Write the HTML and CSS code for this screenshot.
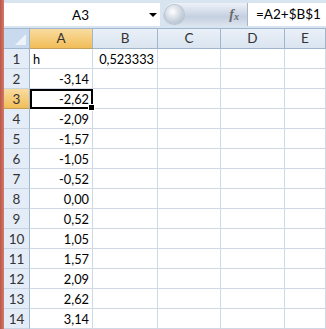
FILE: index.html
```html
<!DOCTYPE html>
<html lang="en">
<head>
  <meta charset="UTF-8" />
  <title>Sheet</title>
  <link rel="stylesheet" href="styles.css">
</head>
<body>
  <div class="window">
    <div class="edge"></div>
    <div class="main">
      <div class="formula-row">
        <div class="name-box">
          <span class="name">A3</span>
          <span class="arrow"></span>
        </div>
        <div class="pill">
          <span class="knob"></span>
          <span class="fx">f<sub>x</sub></span>
        </div>
        <div class="formula">=A2+$B$1</div>
      </div>
      <div class="grid">
        <div class="corner"></div>
        <div class="col-head active">A</div>
        <div class="col-head">B</div>
        <div class="col-head">C</div>
        <div class="col-head">D</div>
        <div class="col-head">E</div>

        <div class="row-head">1</div><div class="cell">h</div><div class="cell num">0,523333</div><div class="cell"></div><div class="cell"></div><div class="cell"></div>
        <div class="row-head">2</div><div class="cell num">-3,14</div><div class="cell"></div><div class="cell"></div><div class="cell"></div><div class="cell"></div>
        <div class="row-head active">3</div><div class="cell num selected">-2,62<span class="handle"></span></div><div class="cell"></div><div class="cell"></div><div class="cell"></div><div class="cell"></div>
        <div class="row-head">4</div><div class="cell num">-2,09</div><div class="cell"></div><div class="cell"></div><div class="cell"></div><div class="cell"></div>
        <div class="row-head">5</div><div class="cell num">-1,57</div><div class="cell"></div><div class="cell"></div><div class="cell"></div><div class="cell"></div>
        <div class="row-head">6</div><div class="cell num">-1,05</div><div class="cell"></div><div class="cell"></div><div class="cell"></div><div class="cell"></div>
        <div class="row-head">7</div><div class="cell num">-0,52</div><div class="cell"></div><div class="cell"></div><div class="cell"></div><div class="cell"></div>
        <div class="row-head">8</div><div class="cell num">0,00</div><div class="cell"></div><div class="cell"></div><div class="cell"></div><div class="cell"></div>
        <div class="row-head">9</div><div class="cell num">0,52</div><div class="cell"></div><div class="cell"></div><div class="cell"></div><div class="cell"></div>
        <div class="row-head">10</div><div class="cell num">1,05</div><div class="cell"></div><div class="cell"></div><div class="cell"></div><div class="cell"></div>
        <div class="row-head">11</div><div class="cell num">1,57</div><div class="cell"></div><div class="cell"></div><div class="cell"></div><div class="cell"></div>
        <div class="row-head">12</div><div class="cell num">2,09</div><div class="cell"></div><div class="cell"></div><div class="cell"></div><div class="cell"></div>
        <div class="row-head">13</div><div class="cell num">2,62</div><div class="cell"></div><div class="cell"></div><div class="cell"></div><div class="cell"></div>
        <div class="row-head">14</div><div class="cell num">3,14</div><div class="cell"></div><div class="cell"></div><div class="cell"></div><div class="cell"></div>
      </div>
    </div>
  </div>
</body>
</html>
```

FILE: styles.css
```css
body {
  margin: 0;
  font-family: Lato, "Liberation Sans", sans-serif;
  font-size: 13.5px;
  color: #000;
  background: #fff;
  overflow: hidden;
}
.window {
  display: flex;
  width: 326px;
  height: 329px;
}
.edge {
  width: 4px;
  background: linear-gradient(to right, #b9574a, #d57a68);
}
.main {
  flex: 1;
  display: flex;
  flex-direction: column;
  min-width: 0;
}
.formula-row {
  display: flex;
  height: 23px;
  padding: 3px 0 2px;
  background: #d9e4f1;
  border-bottom: 1px solid #9eb6ce;
}
.name-box {
  width: 156px;
  background: #fff;
  display: flex;
  align-items: center;
}
.name {
  flex: 1;
  text-align: center;
  padding-left: 8px;
}
.arrow {
  width: 0;
  height: 0;
  border-left: 4px solid transparent;
  border-right: 4px solid transparent;
  border-top: 4px solid #000;
  margin-right: 3px;
}
.pill {
  width: 84px;
  margin-left: 3px;
  border-radius: 12px 0 0 12px;
  background: linear-gradient(#eef2f8, #c4d0e0 60%, #dbe3ee);
  display: flex;
  align-items: center;
  justify-content: space-between;
  border-right: 1px solid #a9b8cc;
}
.knob {
  width: 19px;
  height: 19px;
  border-radius: 50%;
  margin-left: 2px;
  background: radial-gradient(circle at 40% 35%, #ffffff, #c9d2dd 55%, #a8b4c2);
  box-shadow: 0 0 0 1px #b8c4d2;
}
.fx {
  font-family: "Liberation Serif", serif;
  font-style: italic;
  font-weight: bold;
  font-size: 14px;
  color: #6a6a6a;
  margin-right: 8px;
}
.fx sub {
  font-size: 10px;
  vertical-align: -1px;
}
.formula {
  flex: 1;
  background: #fff;
  padding-left: 8px;
  line-height: 23px;
}
.grid {
  display: grid;
  grid-template-columns: 26px 63px 65px 63px 64px 1fr;
  grid-auto-rows: 20px;
}
.corner {
  background: #c9d9ee;
  border-right: 1px solid #9eb6ce;
  border-bottom: 1px solid #9eb6ce;
  position: relative;
}
.corner::after {
  content: "";
  position: absolute;
  right: 3px;
  bottom: 3px;
  border-left: 11px solid transparent;
  border-bottom: 11px solid #eef3fa;
}
.col-head {
  background: linear-gradient(#eaf0f8, #dae4f0);
  border-right: 1px solid #9eb6ce;
  border-bottom: 1px solid #9eb6ce;
  text-align: center;
  line-height: 19px;
  color: #333;
}
.row-head {
  background: #e4ecf7;
  border-right: 1px solid #9eb6ce;
  border-bottom: 1px solid #c5d3e3;
  text-align: center;
  line-height: 20px;
  color: #333;
}
.active {
  background: linear-gradient(#f9dca0, #f1bd58);
  border-bottom-color: #c3a05a;
}
.cell {
  border-right: 1px solid #d0d7e5;
  border-bottom: 1px solid #d0d7e5;
  line-height: 20px;
  padding: 0 3px;
  white-space: nowrap;
  font-size: 12.8px;
}
.num {
  text-align: right;
}
.selected {
  position: relative;
  outline: 2px solid #000;
  outline-offset: -2px;
}
.handle {
  position: absolute;
  right: -3px;
  bottom: -3px;
  width: 5px;
  height: 5px;
  background: #000;
  border: 1px solid #fff;
}
```
